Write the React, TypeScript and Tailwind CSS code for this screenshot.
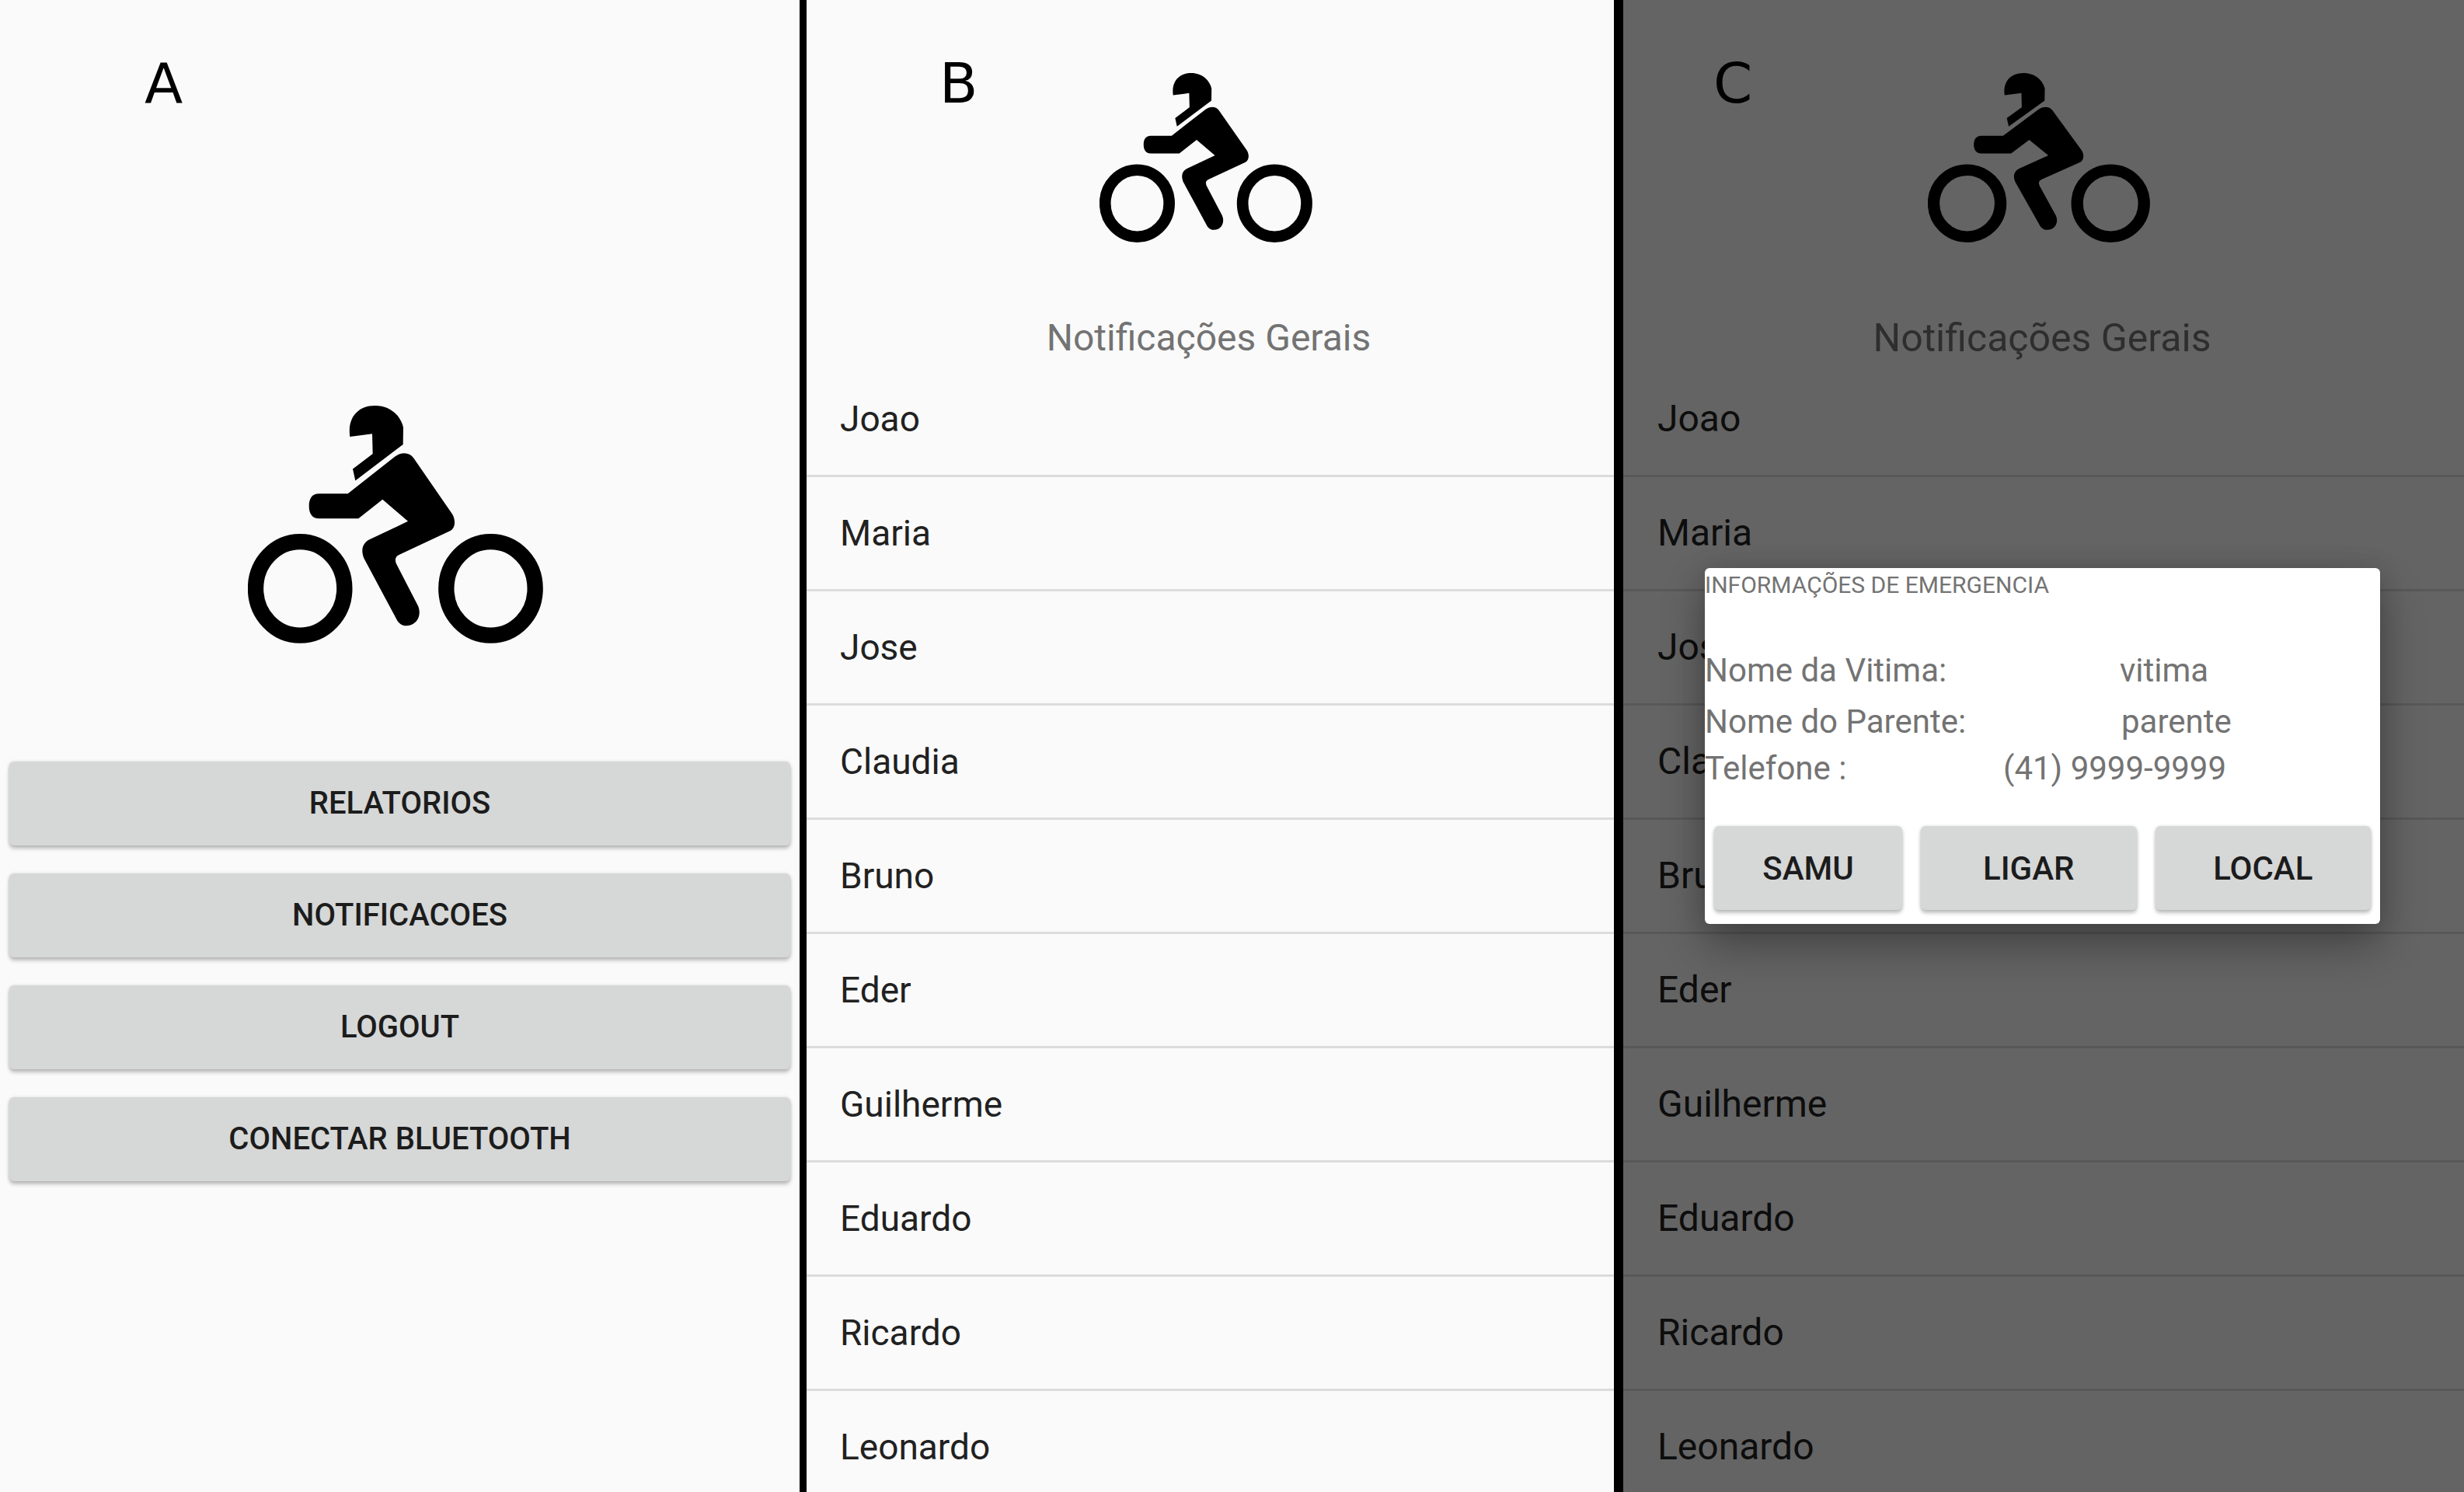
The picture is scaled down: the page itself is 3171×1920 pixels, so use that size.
import type { ReactNode } from "react";

const MENU = ["RELATORIOS", "NOTIFICACOES", "LOGOUT", "CONECTAR BLUETOOTH"];

const NAMES = [
  "Joao",
  "Maria",
  "Jose",
  "Claudia",
  "Bruno",
  "Eder",
  "Guilherme",
  "Eduardo",
  "Ricardo",
  "Leonardo",
];

const BUTTON =
  "h-[108px] rounded-[6px] bg-[#d6d7d7] font-medium text-[#1c1c1c] shadow-[0_4px_5px_rgba(0,0,0,0.24),0_0_4px_rgba(0,0,0,0.12)]";

function Rider({ className }: { className: string }) {
  return (
    <svg
      viewBox="57 68 1140 919"
      preserveAspectRatio="none"
      className={className}
      role="img"
      aria-label="Motociclista"
    >
      <ellipse cx="258.5" cy="775" rx="171.5" ry="181" fill="none" stroke="#000" strokeWidth="61" />
      <ellipse cx="994.5" cy="775" rx="171.5" ry="181" fill="none" stroke="#000" strokeWidth="61" />
      {/* helmet */}
      <path d="M451 188C441 116 480 68 548 68C608 68 647 108 657 152L656 218L472 358L462 313L539 254L537 177Z" />
      {/* body, arm and leg */}
      <path d="M443 408L625 265C650 246 681 248 697 271L846 487C861 512 858 545 834 554L642 644C627 651 623 662 630 679L714 842C722 860 721 882 710 898C689 926 650 925 634 899L506 660C493 629 497 602 525 586L675 515L577 431L484 504H332C306 504 293 487 293 456C293 425 306 408 332 408Z" />
    </svg>
  );
}

function Mark({ className, children }: { className: string; children: ReactNode }) {
  return (
    <span
      className={`absolute top-[71px] font-['DejaVu_Sans',sans-serif] text-[72px] leading-none text-black ${className}`}
    >
      {children}
    </span>
  );
}

function Notifications({
  iconClass,
  titleClass,
  listClass,
}: {
  iconClass: string;
  titleClass: string;
  listClass: string;
}) {
  return (
    <>
      <div className="flex h-[403px] justify-center pt-[94px] pr-3">
        <Rider className={iconClass} />
      </div>
      <h2 className={`pr-1 text-center leading-[64px] text-[#737373] ${titleClass}`}>
        Notificações Gerais
      </h2>
      <ul className={`text-[#212121] ${listClass}`}>
        {NAMES.map((name) => (
          <li key={name} className="border-b-3 border-[#dcdcdc] leading-[144px]">
            {name}
          </li>
        ))}
      </ul>
    </>
  );
}

function Row({
  label,
  value,
  rowClass,
  labelClass,
}: {
  label: string;
  value: string;
  rowClass: string;
  labelClass: string;
}) {
  return (
    <div className={`flex ${rowClass}`}>
      <dt className={`shrink-0 ${labelClass}`}>{label}</dt>
      <dd>{value}</dd>
    </div>
  );
}

export default function App() {
  return (
    <main className="grid h-screen grid-cols-[1029fr_1048fr_1094fr] overflow-hidden bg-[#fafafa] font-[Roboto,sans-serif]">
      <section className="relative min-w-0">
        <Mark className="left-[186px]">A</Mark>
        <div className="flex justify-center pt-[522px] pr-3">
          <Rider className="h-[306px] w-[380px]" />
        </div>
        <nav className="mt-[152px] flex flex-col gap-9 px-3">
          {MENU.map((item) => (
            <button key={item} type="button" className={`text-[40px] ${BUTTON}`}>
              {item}
            </button>
          ))}
        </nav>
      </section>

      <section className="relative min-w-0 overflow-hidden border-l-9 border-black">
        <Mark className="left-[171px]">B</Mark>
        <Notifications
          iconClass="h-[218px] w-[274px]"
          titleClass="text-[48px]"
          listClass="text-[46px] [&>li]:pl-[43px]"
        />
      </section>

      <section className="relative min-w-0 overflow-hidden border-l-12 border-black">
        <Notifications
          iconClass="h-[218px] w-[286px]"
          titleClass="text-[50px]"
          listClass="text-[48px] [&>li]:pl-[44px]"
        />
        <div className="absolute inset-0 flex items-center bg-black/60 pr-[108px] pl-[105px]">
          <Mark className="left-[116px]">C</Mark>
          <div
            role="dialog"
            aria-labelledby="emergency-title"
            className="w-full rounded-[6px] bg-white pt-1 pb-[18px] text-[#737373] shadow-[0_28px_56px_rgba(0,0,0,0.32),0_0_32px_rgba(0,0,0,0.12)]"
          >
            <h3 id="emergency-title" className="text-[30px] leading-[36px]">
              INFORMAÇÕES DE EMERGENCIA
            </h3>
            <dl className="mt-[59px] text-[42px]">
              <Row label="Nome da Vitima:" value="vitima" rowClass="leading-[66px]" labelClass="w-[534px]" />
              <Row label="Nome do Parente:" value="parente" rowClass="leading-[66px]" labelClass="w-[536px]" />
              <Row label="Telefone :" value="(41) 9999-9999" rowClass="leading-[54px]" labelClass="w-[384px]" />
            </dl>
            <div className="mt-[47px] flex gap-6 px-3">
              <button type="button" className={`w-[242px] text-[42px] ${BUTTON}`}>
                SAMU
              </button>
              <button type="button" className={`flex-1 text-[42px] ${BUTTON}`}>
                LIGAR
              </button>
              <button type="button" className={`flex-1 text-[42px] ${BUTTON}`}>
                LOCAL
              </button>
            </div>
          </div>
        </div>
      </section>
    </main>
  );
}
